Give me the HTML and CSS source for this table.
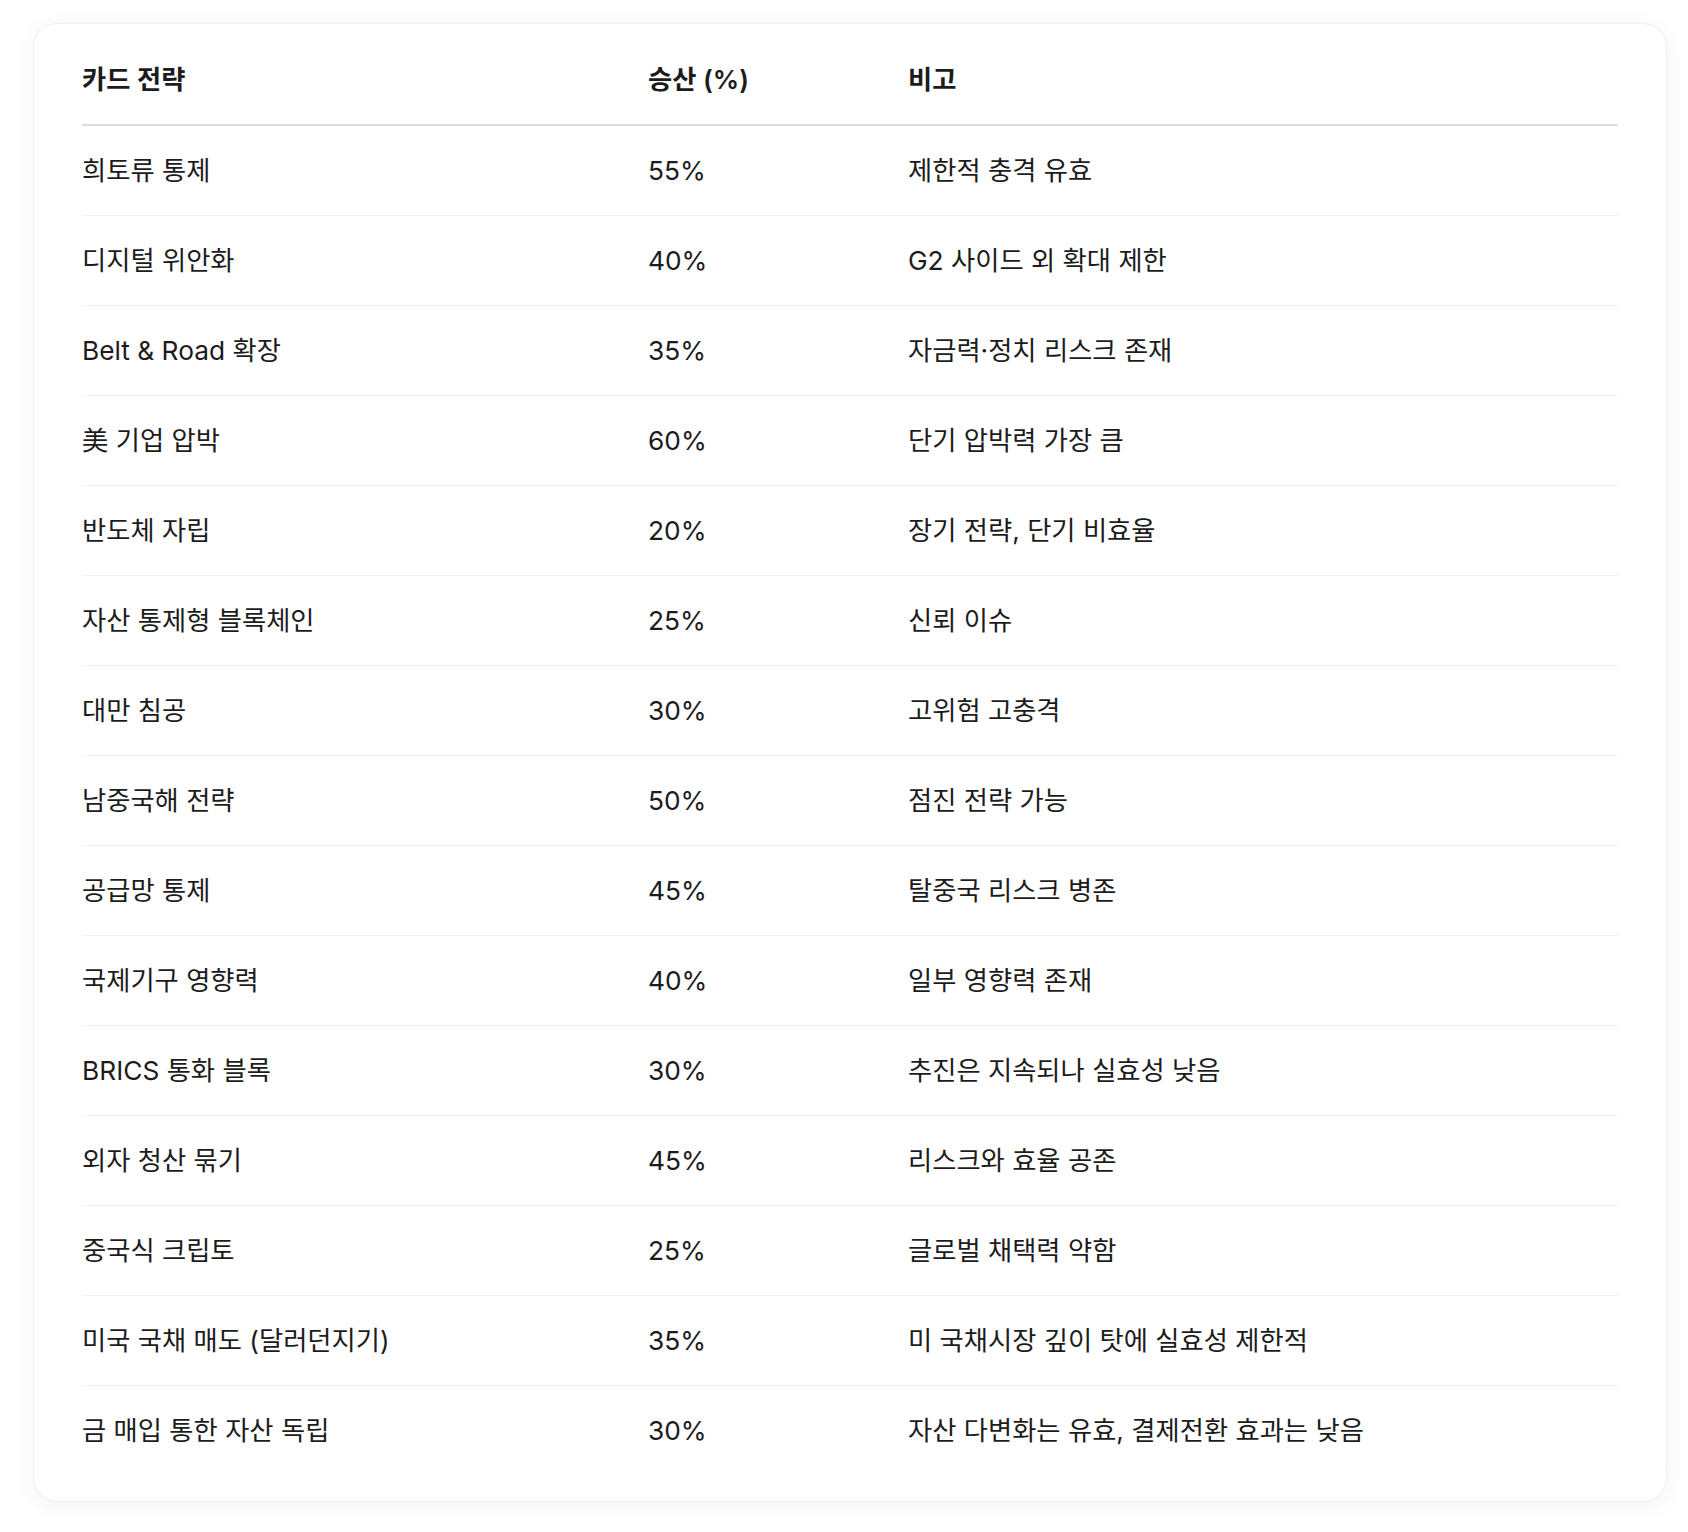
FILE: index.html
```html
<!DOCTYPE html>
<html lang="ko">
<head>
<meta charset="utf-8">
<title>카드 전략</title>
<link rel="stylesheet" href="styles.css">
</head>
<body>
<div class="page">
  <div class="card">
    <table class="strategy">
      <colgroup>
        <col class="c1"><col class="c2"><col class="c3">
      </colgroup>
      <thead>
        <tr><th>카드 전략</th><th>승산 (%)</th><th>비고</th></tr>
      </thead>
      <tbody>
        <tr><td>희토류 통제</td><td>55%</td><td>제한적 충격 유효</td></tr>
        <tr><td>디지털 위안화</td><td>40%</td><td>G2 사이드 외 확대 제한</td></tr>
        <tr><td>Belt &amp; Road 확장</td><td>35%</td><td>자금력·정치 리스크 존재</td></tr>
        <tr><td>美 기업 압박</td><td>60%</td><td>단기 압박력 가장 큼</td></tr>
        <tr><td>반도체 자립</td><td>20%</td><td>장기 전략, 단기 비효율</td></tr>
        <tr><td>자산 통제형 블록체인</td><td>25%</td><td>신뢰 이슈</td></tr>
        <tr><td>대만 침공</td><td>30%</td><td>고위험 고충격</td></tr>
        <tr><td>남중국해 전략</td><td>50%</td><td>점진 전략 가능</td></tr>
        <tr><td>공급망 통제</td><td>45%</td><td>탈중국 리스크 병존</td></tr>
        <tr><td>국제기구 영향력</td><td>40%</td><td>일부 영향력 존재</td></tr>
        <tr><td>BRICS 통화 블록</td><td>30%</td><td>추진은 지속되나 실효성 낮음</td></tr>
        <tr><td>외자 청산 묶기</td><td>45%</td><td>리스크와 효율 공존</td></tr>
        <tr><td>중국식 크립토</td><td>25%</td><td>글로벌 채택력 약함</td></tr>
        <tr><td>미국 국채 매도 (달러던지기)</td><td>35%</td><td>미 국채시장 깊이 탓에 실효성 제한적</td></tr>
        <tr><td>금 매입 통한 자산 독립</td><td>30%</td><td>자산 다변화는 유효, 결제전환 효과는 낮음</td></tr>
      </tbody>
    </table>
  </div>
</div>
</body>
</html>
```
FILE: styles.css
```css
html, body {
  margin: 0;
  padding: 0;
  background: #ffffff;
}
body {
  font-family: Inter, "Noto Sans CJK KR", sans-serif;
  color: #1c1c1c;
}
.page {
  padding: 23px 21px 30px 33px;
}
.card {
  width: 1634px;
  box-sizing: border-box;
  background: #ffffff;
  border: 1px solid #efefef;
  border-radius: 24px;
  box-shadow: 0 4px 24px rgba(0, 0, 0, 0.05);
  padding: 12px 48px 26px 48px;
}
.strategy {
  width: 1536px;
  border-collapse: collapse;
  table-layout: fixed;
  font-size: 26.3px;
  line-height: 36px;
}
.c1 { width: 566px; }
.c2 { width: 260px; }
.c3 { width: 710px; }
.strategy th {
  height: 88px;
  padding: 0;
  text-align: left;
  font-weight: 600;
  vertical-align: middle;
  border-bottom: 2px solid #dcdcdc;
}
.strategy td {
  height: 89px;
  padding: 0;
  vertical-align: middle;
  font-weight: 400;
  border-bottom: 1px solid #f0f0f0;
}
.strategy tbody tr:last-child td {
  border-bottom: none;
}
```
